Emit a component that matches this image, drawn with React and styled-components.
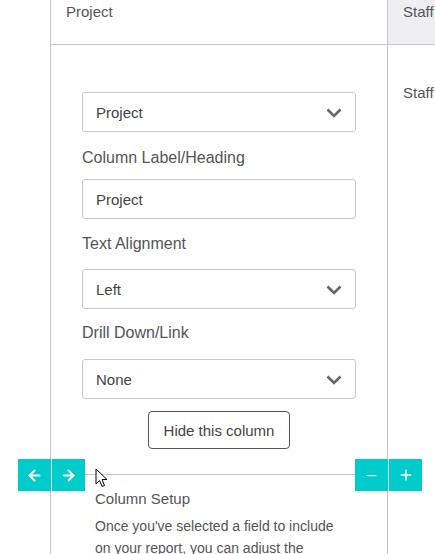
import React from 'react';
import styled, { createGlobalStyle } from 'styled-components';
import { ArrowLeft, ArrowRight, Minus, Plus } from 'lucide-react';

const GlobalStyle = createGlobalStyle`
    body {
        margin: 0;
        font-family: "Liberation Sans", Arial, sans-serif;
        color: #555;
        background: #fff;
        overflow: hidden;
    }
`;

const Table = styled.div`
    display: flex;
    align-items: stretch;
    padding-left: 50px;
    width: 435px;
    height: 554px;
    box-sizing: border-box;
    overflow: hidden;
`;

const Column = styled.div`
    flex: ${p => (p.$grow ? '1 1 auto' : '0 0 338px')};
    box-sizing: border-box;
    border-left: ${p => (p.$grow ? 'none' : '1px solid #c6c6c6')};
    border-right: ${p => (p.$grow ? 'none' : '1px solid #c6c6c6')};
    min-width: 0;
`;

const HeaderCell = styled.div`
    height: 41px;
    border-bottom: 1px solid #c6c6c6;
    background: ${p => (p.$shaded ? '#efeff1' : '#fff')};
    padding: 3px 0 0 15px;
    font-size: 15px;
    line-height: 17px;
    color: #555;
    white-space: nowrap;
`;

const Form = styled.div`
    padding: 47px 31px 0;
    display: flex;
    flex-direction: column;
`;

const StaffBody = styled.div`
    padding: 39px 0 0 15px;
    font-size: 15px;
    line-height: 17px;
    color: #555;
`;

const Label = styled.div`
    font-size: 16px;
    line-height: 18px;
    color: #555;
    margin-top: ${p => p.$top}px;
`;

const Field = styled.div`
    position: relative;
    flex-shrink: 0;
    height: 40px;
    box-sizing: border-box;
    border: 1px solid #c9c9c9;
    border-radius: 3px;
    margin-top: ${p => p.$top || 0}px;
    display: flex;
    align-items: center;
    padding: 0 13px;
    font-size: 15px;
    color: #444;
`;

const Chevron = styled.svg`
    position: absolute;
    right: 13px;
    top: 15px;
`;

const HideButton = styled.button`
    align-self: center;
    margin-top: 12px;
    height: 38px;
    padding: 0 15px;
    border: 1px solid #555;
    border-radius: 4px;
    background: #fff;
    font-family: inherit;
    font-size: 15px;
    color: #444;
`;

const Divider = styled.div`
    position: relative;
    margin-top: 25px;
    height: 1px;
    background: #c6c6c6;
`;

const ButtonGroup = styled.div`
    position: absolute;
    top: -15px;
    left: ${p => p.$left}px;
    display: flex;
    gap: 1px;
    background: #e6e6e6;
`;

const TealButton = styled.div`
    width: 33px;
    height: 32px;
    background: #00cccc;
    color: #fff;
    display: flex;
    align-items: center;
    justify-content: center;
`;

const Cursor = styled.svg`
    position: absolute;
    left: 44px;
    top: -6px;
`;

const Setup = styled.div`
    padding: 15px 0 0 44px;
    width: 248px;
`;

const SetupTitle = styled.div`
    font-size: 15px;
    line-height: 17px;
    color: #555;
`;

const SetupText = styled.p`
    margin: 8px 0 0;
    font-size: 14px;
    line-height: 22px;
    color: #555;
`;

const Select = ({ value, top }) => (
    <Field $top={top}>
        {value}
        <Chevron width="16" height="10" viewBox="0 0 16 10">
            <polyline points="1.5,1.5 8,8 14.5,1.5" fill="none" stroke="#666" strokeWidth="2.6" />
        </Chevron>
    </Field>
);

const App = () => {
    return (
        <>
            <GlobalStyle />
            <Table>
                <Column>
                    <HeaderCell>Project</HeaderCell>
                    <Form>
                        <Select value="Project" />
                        <Label $top={17}>Column Label/Heading</Label>
                        <Field $top={12}>Project</Field>
                        <Label $top={16}>Text Alignment</Label>
                        <Select value="Left" top={16} />
                        <Label $top={15}>Drill Down/Link</Label>
                        <Select value="None" top={17} />
                        <HideButton>Hide this column</HideButton>
                    </Form>
                    <Divider>
                        <ButtonGroup $left={-33}>
                            <TealButton><ArrowLeft size={17} strokeWidth={2.8} /></TealButton>
                            <TealButton><ArrowRight size={17} strokeWidth={2.8} /></TealButton>
                        </ButtonGroup>
                        <ButtonGroup $left={304}>
                            <TealButton><Minus size={15} strokeWidth={2} /></TealButton>
                            <TealButton><Plus size={16} strokeWidth={2.6} /></TealButton>
                        </ButtonGroup>
                        <Cursor width="13" height="20" viewBox="0 0 13 20">
                            <path d="M1 1 L1 16 L4.5 12.5 L7 18.5 L9.5 17.5 L7 11.5 L12 11.5 Z" fill="#fff" stroke="#000" strokeWidth="1" strokeLinejoin="miter" />
                        </Cursor>
                    </Divider>
                    <Setup>
                        <SetupTitle>Column Setup</SetupTitle>
                        <SetupText>
                            Once you've selected a field to include on your report, you can adjust the
                            settings for how that column is displayed.
                        </SetupText>
                    </Setup>
                </Column>
                <Column $grow>
                    <HeaderCell $shaded>Staff</HeaderCell>
                    <StaffBody>Staff</StaffBody>
                </Column>
            </Table>
        </>
    );
};

export default App;
